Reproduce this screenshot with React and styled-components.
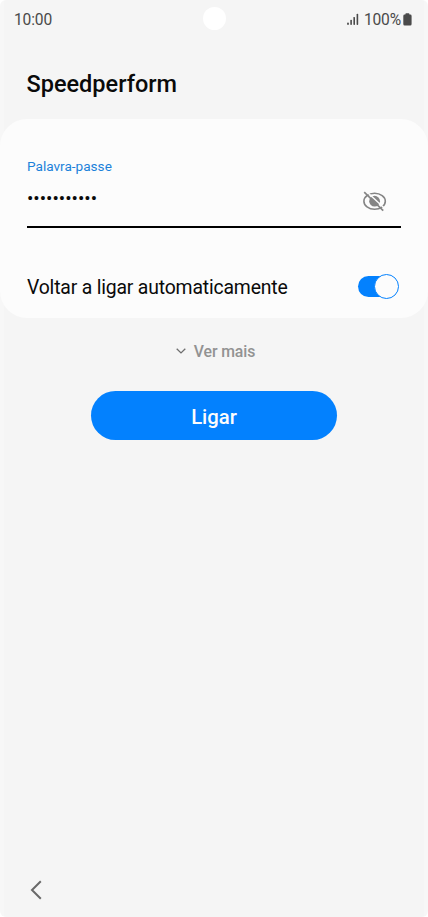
import { useState } from "react";
import styled, { createGlobalStyle } from "styled-components";

const GlobalStyle = createGlobalStyle`
  * {
    box-sizing: border-box;
  }
  body {
    margin: 0;
    background: #ffffff;
    font-family: Roboto, "Liberation Sans", sans-serif;
    color: #0a0a0a;
  }
  button {
    border: none;
    padding: 0;
    background: transparent;
    font-family: inherit;
    cursor: pointer;
  }
`;

const SignalIcon = () => (
  <svg width='12' height='13' viewBox='0 0 12 13' fill='#4a4a4a'>
    <rect x='0.2' y='9.5' width='1.6' height='2.5' rx='0.7' />
    <rect x='3.3' y='6.7' width='1.6' height='5.3' rx='0.7' />
    <rect x='6.4' y='3.9' width='1.6' height='8.1' rx='0.7' />
    <rect x='9.6' y='0.8' width='1.6' height='11.2' rx='0.7' />
  </svg>
);

const BatteryIcon = () => (
  <svg width='9' height='13' viewBox='0 0 9 13' fill='#4a4a4a'>
    <path d='M2.4 1.6V1.1Q2.4 0.3 3.2 0.3H5.6Q6.4 0.3 6.4 1.1V1.6H7.2Q8.6 1.6 8.6 3V11Q8.6 12.5 7.2 12.5H1.7Q0.3 12.5 0.3 11V3Q0.3 1.6 1.7 1.6Z' />
  </svg>
);

const HiddenIcon = () => (
  <svg width='24' height='22' viewBox='0 0 24 22' fill='none'>
    <ellipse cx='11.6' cy='10.2' rx='10.7' ry='8' stroke='#858585' strokeWidth='1.6' />
    <circle cx='11.6' cy='10.2' r='5.4' fill='#858585' />
    <path d='M2.6 -0.3L22.3 18.1' stroke='#fcfcfc' strokeWidth='1.4' />
    <path d='M1.2 1.2L20.2 19.6' stroke='#858585' strokeWidth='1.7' />
  </svg>
);

const ChevronDown = () => (
  <svg width='10' height='7' viewBox='0 0 10 7' fill='none'>
    <path d='M0.7 0.7L5 4.9L9.3 0.7' stroke='#6e6e6e' strokeWidth='1.3' />
  </svg>
);

const ChevronLeft = () => (
  <svg width='12' height='20' viewBox='0 0 12 20' fill='none'>
    <path d='M10.8 1.2L2 10L10.8 18.8' stroke='#696969' strokeWidth='2' />
  </svg>
);

const App = () => {
  const [autoReconnect, setAutoReconnect] = useState(true);

  return (
    <>
      <GlobalStyle />
      <Screen>
        <StatusBar>
          <span>10:00</span>
          <Camera />
          <StatusIcons>
            <SignalIcon />
            <span className='battery'>100%</span>
            <BatteryIcon />
          </StatusIcons>
        </StatusBar>
        <Title>Speedperform</Title>
        <Card>
          <Label>Palavra-passe</Label>
          <Field>
            <Password>•••••••••••</Password>
            <EyeButton aria-label='Mostrar palavra-passe'>
              <HiddenIcon />
            </EyeButton>
          </Field>
          <SwitchRow>
            <SwitchText>Voltar a ligar automaticamente</SwitchText>
            <Switch
              role='switch'
              aria-checked={autoReconnect}
              onClick={() => setAutoReconnect(!autoReconnect)}
            >
              <Track $on={autoReconnect} />
              <Thumb $on={autoReconnect} />
            </Switch>
          </SwitchRow>
        </Card>
        <MoreButton>
          <ChevronDown />
          Ver mais
        </MoreButton>
        <ConnectButton>Ligar</ConnectButton>
        <NavBar>
          <button aria-label='Voltar'>
            <ChevronLeft />
          </button>
        </NavBar>
      </Screen>
    </>
  );
};

const Screen = styled.main`
  width: 428px;
  height: 917px;
  display: flex;
  flex-direction: column;
  background: linear-gradient(
    to right,
    #f7f7f7 4px,
    #f5f5f5 4px,
    #f5f5f5 424px,
    #f7f7f7 424px
  );
  border-radius: 6px;
  overflow: hidden;
`;

const StatusBar = styled.header`
  height: 38px;
  display: grid;
  grid-template-columns: 1fr 23px 1fr;
  align-items: center;
  padding: 1px 15px 0 14px;
  font-size: 15.6px;
  letter-spacing: -0.15px;
  line-height: 18px;
  color: #4a4a4a;
`;

const Camera = styled.div`
  width: 23px;
  height: 23px;
  margin: -2px 0 0 1px;
  border-radius: 50%;
  background: #ffffff;
`;

const StatusIcons = styled.div`
  display: flex;
  align-items: center;
  justify-content: flex-end;
  margin-right: 1px;
  .battery {
    margin: 0 2px 0 5px;
  }
`;

const Title = styled.h1`
  height: 81px;
  margin: 0;
  padding: 32px 26.5px 0;
  font-size: 23.5px;
  font-weight: 500;
  line-height: 28px;
`;

const Card = styled.section`
  height: 199px;
  padding: 39px 27px 0;
  border-radius: 27px;
  background: #fcfcfc;
`;

const Label = styled.div`
  font-size: 13.6px;
  line-height: 16px;
  color: #1c82da;
`;

const Field = styled.div`
  height: 54px;
  display: flex;
  align-items: flex-start;
  justify-content: space-between;
  border-bottom: 2px solid #000000;
`;

const Password = styled.span`
  margin-top: 14px;
  font-size: 18.9px;
  line-height: 22px;
`;

const EyeButton = styled.button`
  display: flex;
  margin: 17px 14px 0 0;
`;

const SwitchRow = styled.div`
  margin-top: 45px;
  height: 26px;
  display: flex;
  align-items: center;
  justify-content: space-between;
`;

const SwitchText = styled.span`
  padding-top: 3px;
  font-size: 19.4px;
  letter-spacing: -0.18px;
  line-height: 24px;
  white-space: nowrap;
`;

const Switch = styled.button`
  width: 41px;
  height: 25px;
  margin-right: 2px;
  display: grid;
  align-items: center;
`;

const Track = styled.span`
  grid-area: 1 / 1;
  width: 39px;
  height: 21px;
  border-radius: 11px;
  background: ${({ $on }) => ($on ? "#0381fe" : "#9a9a9a")};
`;

const Thumb = styled.span`
  grid-area: 1 / 1;
  justify-self: ${({ $on }) => ($on ? "end" : "start")};
  width: 25px;
  height: 25px;
  border: 1.5px solid ${({ $on }) => ($on ? "#0381fe" : "#9a9a9a")};
  border-radius: 50%;
  background: #fcfcfc;
`;

const MoreButton = styled.button`
  align-self: center;
  margin: 23px 0 0 3px;
  height: 20px;
  display: flex;
  align-items: center;
  gap: 8px;
  font-size: 15.8px;
  letter-spacing: -0.1px;
  font-weight: 500;
  color: #929292;
`;

const ConnectButton = styled.button`
  align-self: center;
  width: 246px;
  height: 49px;
  margin-top: 30px;
  padding-top: 2px;
  border-radius: 25px;
  background: #0381fe;
  font-size: 20.3px;
  font-weight: 500;
  color: #fcfcfc;
`;

const NavBar = styled.nav`
  height: 55px;
  margin-top: auto;
  padding: 3px 30px 0;
  display: flex;
  align-items: center;
`;

export default App;
